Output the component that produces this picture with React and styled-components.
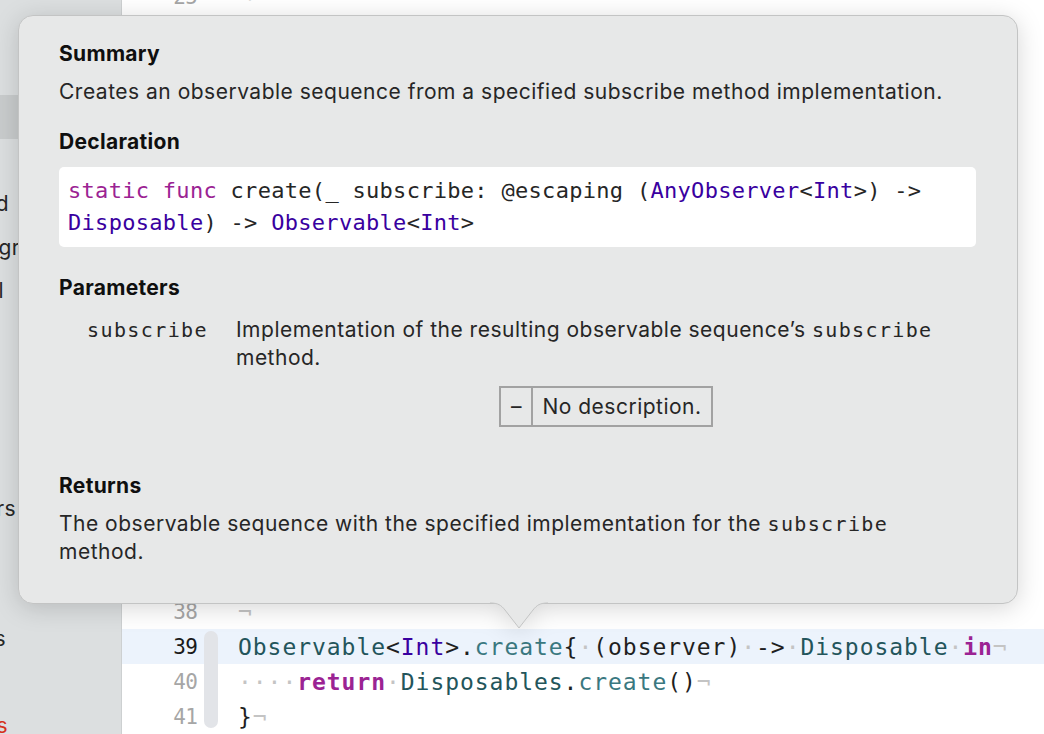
import React from 'react';
import styled, { createGlobalStyle } from 'styled-components';

const Global = createGlobalStyle`
  html, body { margin: 0; padding: 0; width: 1044px; height: 734px; overflow: hidden; background: #ffffff; }
  #root { width: 1044px; height: 734px; }
  * { box-sizing: border-box; }
`;

const SANS = `Inter, "Noto Sans", "Liberation Sans", sans-serif`;
const MONO = `"DejaVu Sans Mono", "Liberation Mono", monospace`;

const COLORS = {
  plain: '#1f1f1f',
  kw: '#9b2393',
  type: '#23555b',
  fn: '#3a7880',
  int: '#3900a0',
  inv: '#c4c4c4',
  dkw: '#9b2393',
  dtype: '#3900a0',
};

const Window = styled.div`
  position: relative;
  display: flex;
  width: 1044px;
  height: 734px;
  overflow: hidden;
  font-family: ${SANS};
`;

/* ---------- Sidebar ---------- */
const Sidebar = styled.aside`
  width: 122px;
  flex-shrink: 0;
  background: #dcdfe0;
  border-right: 1px solid #cdd0d1;
  padding-top: 8px;
  overflow: hidden;
  display: flex;
  flex-direction: column;
`;

const SideRow = styled.div`
  height: 43.5px;
  flex-shrink: 0;
  display: flex;
  align-items: center;
  background: ${(p) => (p.$selected ? '#c9cccd' : 'transparent')};
`;

const SideLabel = styled.div`
  width: ${(p) => p.$end}px;
  display: flex;
  justify-content: flex-end;
  overflow: hidden;
  font-size: 21px;
  letter-spacing: 0.4px;
  color: ${(p) => (p.$error ? '#d5301c' : '#262626')};
  white-space: nowrap;
  span { flex-shrink: 0; }
`;

/* ---------- Editor ---------- */
const Editor = styled.main`
  flex: 1;
  background: #ffffff;
  overflow: hidden;
  display: flex;
  flex-direction: column;
`;

const Lines = styled.div`
  margin-top: -21px;
  display: flex;
  flex-direction: column;
`;

const Hidden = styled.div`
  height: ${(p) => p.$h}px;
  flex-shrink: 0;
`;

const Line = styled.div`
  display: grid;
  grid-template-columns: 75px 41px 1fr;
  height: 35px;
  flex-shrink: 0;
  align-items: center;
  background: ${(p) => (p.$current ? '#ecf3fc' : 'transparent')};
`;

const LineNo = styled.div`
  text-align: right;
  font-family: ${MONO};
  font-size: 21px;
  letter-spacing: -0.8px;
  color: ${(p) => (p.$current ? '#1a1a1a' : '#a6a6a6')};
`;

const RibbonCell = styled.div`
  align-self: stretch;
  display: flex;
  padding-left: 7px;
`;

const Ribbon = styled.div`
  width: 14px;
  background: #e2e4e8;
  margin-top: ${(p) => (p.$first ? 2 : 0)}px;
  margin-bottom: ${(p) => (p.$last ? 6 : 0)}px;
  border-radius: ${(p) => (p.$first ? '7px 7px' : '0 0')} ${(p) => (p.$last ? '7px 7px' : '0 0')};
`;

const Code = styled.div`
  font-family: ${MONO};
  font-size: 23px;
  letter-spacing: 0.95px;
  white-space: pre;
  color: ${COLORS.plain};
`;

const Tok = styled.span`
  color: ${(p) => COLORS[p.$k] || COLORS.plain};
  font-weight: ${(p) => (p.$k === 'kw' ? 700 : 400)};
`;

/* ---------- Quick Help popover ---------- */
const Popover = styled.section`
  position: absolute;
  left: 18px;
  top: 15px;
  width: 1000px;
  background: #e7e8e8;
  border: 1px solid #c3c4c4;
  border-radius: 15px;
  padding: 24px 41px 37px 40px;
  filter: drop-shadow(0 4px 12px rgba(0, 0, 0, 0.16));
  color: #262626;
`;

const Arrow = styled.svg`
  position: absolute;
  left: 471px;
  bottom: -26px;
  width: 58px;
  height: 27px;
  overflow: visible;
`;

const Heading = styled.h3`
  margin: ${(p) => p.$mt || 0}px 0 0;
  font-size: 21px;
  line-height: 28px;
  letter-spacing: 0.3px;
  font-weight: 700;
  color: #0f0f0f;
`;

const Prose = styled.p`
  margin: ${(p) => p.$mt || 0}px 0 0;
  font-size: 21px;
  line-height: 28px;
  letter-spacing: 0.5px;
  color: #262626;
  max-width: ${(p) => p.$max || 'none'};
`;

const InlineCode = styled.code`
  font-family: ${MONO};
  font-size: 20px;
  letter-spacing: 1.36px;
`;

const Declaration = styled.pre`
  margin: 11px 0 0;
  background: #ffffff;
  border-radius: 5px;
  padding: 8px 9px;
  font-family: ${MONO};
  font-size: 22px;
  line-height: 32px;
  letter-spacing: 0.3px;
  white-space: pre-wrap;
  color: #262626;
`;

const DTok = styled.span`
  color: ${(p) => COLORS[p.$k]};
`;

const ParamGrid = styled.div`
  margin-top: 14px;
  display: grid;
  grid-template-columns: auto 1fr;
  column-gap: 28px;
  padding-left: 28px;
`;

const ParamName = styled.div`
  font-family: ${MONO};
  font-size: 20px;
  line-height: 28px;
  letter-spacing: 1.4px;
  color: #262626;
`;

const ParamBody = styled.div`
  display: flex;
  flex-direction: column;
`;

const Table = styled.table`
  margin: 14px auto 0;
  border-collapse: collapse;
  border: 2px solid #a2a2a2;
  font-size: 21px;
  letter-spacing: 0.5px;
  color: #262626;
  td {
    border: 2px solid #a2a2a2;
    height: 39px;
    padding: 0 9px;
    line-height: 28px;
  }
`;

const DashCell = styled.td`
  width: 32px;
  text-align: center;
  && { padding: 0; }
`;

export default function App() {
  const sideRows = [
    {},
    {},
    { selected: true },
    {},
    { text: 'Embed', end: 9 },
    { text: 'Backgr', end: 20 },
    { text: 'Label', end: 4 },
    {},
    {},
    {},
    {},
    { text: 'Colors', end: 16 },
    {},
    {},
    { text: 'Assets', end: 6 },
    {},
    { text: 'Errors', end: 8, error: true },
  ];

  return (
    <>
      <Global />
      <Window>
        <Sidebar>
          {sideRows.map((r, i) => (
            <SideRow key={i} $selected={r.selected}>
              {r.text && (
                <SideLabel $end={r.end} $error={r.error}>
                  <span>{r.text}</span>
                </SideLabel>
              )}
            </SideRow>
          ))}
        </Sidebar>

        <Editor>
          <Lines>
            <Line>
              <LineNo>25</LineNo>
              <RibbonCell />
              <Code><Tok $k="inv">¬</Tok></Code>
            </Line>
            <Hidden $h={580} />
            <Line>
              <LineNo>38</LineNo>
              <RibbonCell />
              <Code><Tok $k="inv">¬</Tok></Code>
            </Line>
            <Line $current>
              <LineNo $current>39</LineNo>
              <RibbonCell><Ribbon $first /></RibbonCell>
              <Code>
                <Tok $k="type">Observable</Tok>&lt;<Tok $k="int">Int</Tok>&gt;.<Tok $k="fn">create</Tok>{'{'}
                <Tok $k="inv">·</Tok>(observer)<Tok $k="inv">·</Tok>-&gt;<Tok $k="inv">·</Tok>
                <Tok $k="type">Disposable</Tok><Tok $k="inv">·</Tok><Tok $k="kw">in</Tok><Tok $k="inv">¬</Tok>
              </Code>
            </Line>
            <Line>
              <LineNo>40</LineNo>
              <RibbonCell><Ribbon /></RibbonCell>
              <Code>
                <Tok $k="inv">····</Tok><Tok $k="kw">return</Tok><Tok $k="inv">·</Tok>
                <Tok $k="type">Disposables</Tok>.<Tok $k="fn">create</Tok>()<Tok $k="inv">¬</Tok>
              </Code>
            </Line>
            <Line>
              <LineNo>41</LineNo>
              <RibbonCell><Ribbon $last /></RibbonCell>
              <Code>{'}'}<Tok $k="inv">¬</Tok></Code>
            </Line>
          </Lines>
        </Editor>

        <Popover>
          <Heading>Summary</Heading>
          <Prose $mt={10}>
            Creates an observable sequence from a specified subscribe method implementation.
          </Prose>

          <Heading $mt={22}>Declaration</Heading>
          <Declaration>
            <DTok $k="dkw">static</DTok> <DTok $k="dkw">func</DTok> create(_ subscribe: @escaping (
            <DTok $k="dtype">AnyObserver</DTok>&lt;<DTok $k="dtype">Int</DTok>&gt;) -&gt;{' '}
            <DTok $k="dtype">Disposable</DTok>) -&gt; <DTok $k="dtype">Observable</DTok>&lt;
            <DTok $k="dtype">Int</DTok>&gt;
          </Declaration>

          <Heading $mt={27}>Parameters</Heading>
          <ParamGrid>
            <ParamName>subscribe</ParamName>
            <ParamBody>
              <Prose $max="712px">
                Implementation of the resulting observable sequence’s <InlineCode>subscribe</InlineCode> method.
              </Prose>
              <Table>
                <tbody>
                  <tr>
                    <DashCell>–</DashCell>
                    <td>No description.</td>
                  </tr>
                </tbody>
              </Table>
            </ParamBody>
          </ParamGrid>

          <Heading $mt={45}>Returns</Heading>
          <Prose $mt={10} $max="880px">
            The observable sequence with the specified implementation for the <InlineCode>subscribe</InlineCode> method.
          </Prose>

          <Arrow viewBox="0 0 58 27">
            <path d="M0,1 C8,1 11,3 15,8 L29,26 L43,8 C47,3 50,1 58,1 L58,-1 L0,-1 Z" fill="#e7e8e8" />
            <path d="M0,1 C8,1 11,3 15,8 L29,26 L43,8 C47,3 50,1 58,1" fill="none" stroke="#c3c4c4" strokeWidth="1" />
          </Arrow>
        </Popover>
      </Window>
    </>
  );
}
